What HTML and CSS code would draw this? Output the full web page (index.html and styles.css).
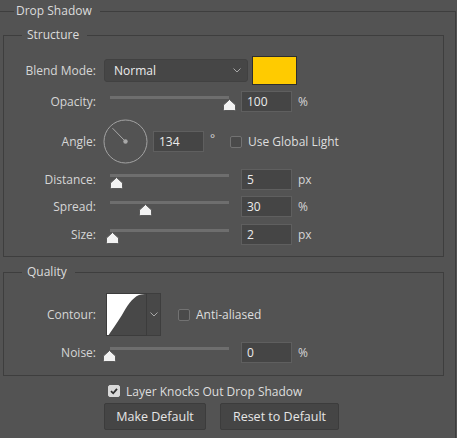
FILE: index.html
```html
<!DOCTYPE html>
<html>
<head>
<meta charset="utf-8">
<link rel="stylesheet" href="styles.css">
</head>
<body>
<fieldset class="group outer">
  <legend>Drop Shadow</legend>

  <fieldset class="group inner structure">
    <legend>Structure</legend>

    <div class="row row-blend">
      <span class="label">Blend Mode:</span>
      <div class="select">
        <span>Normal</span>
        <svg class="chev" width="8" height="5" viewBox="0 0 8 5"><path d="M0.5 0.5 L4 4 L7.5 0.5" fill="none" stroke="#a8a8a8" stroke-width="1"/></svg>
      </div>
      <div class="swatch"></div>
    </div>

    <div class="row row-slider gap-6">
      <span class="label">Opacity:</span>
      <div class="slider">
        <div class="track"></div>
        <svg class="thumb" style="left:113px" width="13" height="12" viewBox="0 0 13 12"><path d="M6.5 0.5 L12.5 6 L12.5 10.5 Q12.5 11.5 11.5 11.5 L1.5 11.5 Q0.5 11.5 0.5 10.5 L0.5 6 Z" fill="#f2f2f2" stroke="#5a5a5a" stroke-width="1"/></svg>
      </div>
      <div class="field">100</div>
      <span class="unit">%</span>
    </div>

    <div class="row row-angle">
      <span class="label">Angle:</span>
      <svg class="dial" width="45" height="45" viewBox="0 0 45 45">
        <circle cx="22.5" cy="22.5" r="21.5" fill="none" stroke="#a3a3a3" stroke-width="1"/>
        <line x1="22.5" y1="22.5" x2="9.5" y2="9.2" stroke="#a8a8a8" stroke-width="1"/>
        <circle cx="22.5" cy="22.5" r="2.2" fill="#a8a8a8"/>
      </svg>
      <div class="field field-angle">134</div>
      <span class="deg">°</span>
      <span class="check"></span>
      <span class="check-label">Use Global Light</span>
    </div>

    <div class="row row-slider gap-5">
      <span class="label">Distance:</span>
      <div class="slider">
        <div class="track"></div>
        <svg class="thumb" style="left:0px" width="13" height="12" viewBox="0 0 13 12"><path d="M6.5 0.5 L12.5 6 L12.5 10.5 Q12.5 11.5 11.5 11.5 L1.5 11.5 Q0.5 11.5 0.5 10.5 L0.5 6 Z" fill="#f2f2f2" stroke="#5a5a5a" stroke-width="1"/></svg>
      </div>
      <div class="field">5</div>
      <span class="unit">px</span>
    </div>

    <div class="row row-slider gap-6">
      <span class="label">Spread:</span>
      <div class="slider">
        <div class="track"></div>
        <svg class="thumb" style="left:29px" width="13" height="12" viewBox="0 0 13 12"><path d="M6.5 0.5 L12.5 6 L12.5 10.5 Q12.5 11.5 11.5 11.5 L1.5 11.5 Q0.5 11.5 0.5 10.5 L0.5 6 Z" fill="#f2f2f2" stroke="#5a5a5a" stroke-width="1"/></svg>
      </div>
      <div class="field">30</div>
      <span class="unit">%</span>
    </div>

    <div class="row row-slider gap-7">
      <span class="label">Size:</span>
      <div class="slider">
        <div class="track"></div>
        <svg class="thumb" style="left:-4px" width="13" height="12" viewBox="0 0 13 12"><path d="M6.5 0.5 L12.5 6 L12.5 10.5 Q12.5 11.5 11.5 11.5 L1.5 11.5 Q0.5 11.5 0.5 10.5 L0.5 6 Z" fill="#f2f2f2" stroke="#5a5a5a" stroke-width="1"/></svg>
      </div>
      <div class="field">2</div>
      <span class="unit">px</span>
    </div>
  </fieldset>

  <fieldset class="group inner quality">
    <legend>Quality</legend>

    <div class="row row-contour">
      <span class="label">Contour:</span>
      <div class="contour">
        <svg class="contour-preview" width="41" height="43" viewBox="0 0 41 43">
          <rect x="0" y="0" width="41" height="43" fill="#ffffff"/>
          <path d="M2 43 C6 37 11 30 16 22 C21 13 26 5 33 2 C36 1 38 1 41 1 L41 43 Z" fill="#484848"/>
          <rect x="0.5" y="0.5" width="40" height="42" fill="none" stroke="#3c3c3c"/>
        </svg>
        <div class="contour-btn">
          <svg width="8" height="5" viewBox="0 0 8 5"><path d="M0.5 0.5 L4 4 L7.5 0.5" fill="none" stroke="#a8a8a8" stroke-width="1"/></svg>
        </div>
      </div>
      <span class="check check-aa"></span>
      <span class="check-label">Anti-aliased</span>
    </div>

    <div class="row row-slider gap-6">
      <span class="label">Noise:</span>
      <div class="slider">
        <div class="track"></div>
        <svg class="thumb" style="left:-7px" width="13" height="12" viewBox="0 0 13 12"><path d="M6.5 0.5 L12.5 6 L12.5 10.5 Q12.5 11.5 11.5 11.5 L1.5 11.5 Q0.5 11.5 0.5 10.5 L0.5 6 Z" fill="#f2f2f2" stroke="#5a5a5a" stroke-width="1"/></svg>
      </div>
      <div class="field">0</div>
      <span class="unit">%</span>
    </div>
  </fieldset>

  <div class="knockout">
    <span class="check checked">
      <svg width="10" height="10" viewBox="0 0 10 10"><path d="M2 5.2 L4.2 7.3 L8 2.8" fill="none" stroke="#2e2e2e" stroke-width="1.8"/></svg>
    </span>
    <span class="check-label">Layer Knocks Out Drop Shadow</span>
  </div>

  <div class="buttons">
    <button class="btn btn-make">Make Default</button>
    <button class="btn btn-reset">Reset to Default</button>
  </div>
</fieldset>
</body>
</html>
```

FILE: styles.css
```css
* {
  box-sizing: border-box;
}

html,
body {
  margin: 0;
  padding: 0;
  background: #535353;
}

body {
  width: 457px;
  height: 438px;
  overflow: hidden;
  font-family: "Open Sans", "Noto Sans", sans-serif;
  font-size: 12px;
  color: #d6d6d6;
}

.group {
  margin: 0;
  padding: 0;
  min-width: 0;
  border: 1px solid #3e3e3e;
}

.group > legend {
  padding: 0 8px 0 5px;
  line-height: 16px;
  font-size: 12px;
  color: #dcdcdc;
}

.outer {
  margin-top: 3px;
  width: 456px;
  height: 435px;
  border-left: none;
  border-bottom: none;
}

.outer > legend {
  margin-left: 14px;
  padding: 0 8px 0 2px;
}

.inner {
  margin-left: 3px;
  width: 441px;
}

.inner > legend {
  margin-left: 18px;
}

.structure {
  margin-top: 8px;
  padding: 13px 0 11px;
}

.quality {
  margin-top: 7px;
  padding: 13px 0 12px;
}

.row {
  display: flex;
  align-items: center;
}

.label {
  flex: none;
  width: 92px;
  text-align: right;
}

.gap-5 { margin-top: 5px; }
.gap-6 { margin-top: 6px; }
.gap-7 { margin-top: 7px; }

/* blend mode */
.row-blend {
  height: 29px;
}

.select {
  display: flex;
  align-items: center;
  justify-content: space-between;
  margin-left: 8px;
  width: 144px;
  height: 23px;
  padding: 0 6px 0 9px;
  background: #464646;
  border: 1px solid #414141;
  border-radius: 3px;
  color: #ececec;
}

.swatch {
  margin-left: 4px;
  width: 45px;
  height: 29px;
  background: #ffcb00;
  border: 1px solid #2e2e2e;
}

/* sliders */
.row-slider {
  height: 21px;
}

.slider {
  position: relative;
  flex: none;
  align-self: stretch;
  margin-left: 14px;
  width: 119px;
}

.track {
  margin-top: 5px;
  height: 3px;
  background: #6e6e6e;
}

.thumb {
  position: absolute;
  top: 8px;
}

.field {
  flex: none;
  margin-left: 12px;
  width: 51px;
  height: 21px;
  padding-left: 5px;
  line-height: 19px;
  background: #454545;
  border: 1px solid #5f5f5f;
  color: #ececec;
}

.unit {
  margin-left: 6px;
}

/* angle */
.row-angle {
  margin-top: 7px;
  height: 45px;
}

.dial {
  flex: none;
  margin-left: 7px;
}

.field-angle {
  margin-left: 5px;
}

.deg {
  width: 20px;
  margin-left: 6px;
  margin-top: -6px;
}

.check {
  flex: none;
  display: inline-flex;
  align-items: center;
  justify-content: center;
  width: 12px;
  height: 12px;
  background: #4a4a4a;
  border: 1px solid #727272;
  border-radius: 2px;
}

.check-label {
  margin-left: 6px;
  color: #dedede;
}

/* contour */
.row-contour {
  height: 43px;
}

.contour {
  display: flex;
  margin-left: 10px;
}

.contour-preview {
  display: block;
}

.contour-btn {
  display: flex;
  align-items: center;
  justify-content: center;
  width: 14px;
  height: 43px;
  background: #484848;
  border: 1px solid #3e3e3e;
  border-left: none;
}

.check-aa {
  margin-left: 17px;
}

/* knockout + buttons */
.knockout {
  display: flex;
  align-items: center;
  margin-top: 9px;
  padding-left: 108px;
  height: 12px;
}

.checked {
  background: #d9d9d9;
  border-color: #d9d9d9;
}

.buttons {
  display: flex;
  gap: 14px;
  margin-top: 6px;
  padding-left: 104px;
}

.btn {
  height: 27px;
  padding: 0;
  font-family: inherit;
  font-size: 12.5px;
  color: #e6e6e6;
  background: #454545;
  border: 1px solid #3c3c3c;
  border-radius: 2px;
}

.btn-make {
  width: 102px;
}

.btn-reset {
  width: 119px;
}
```
